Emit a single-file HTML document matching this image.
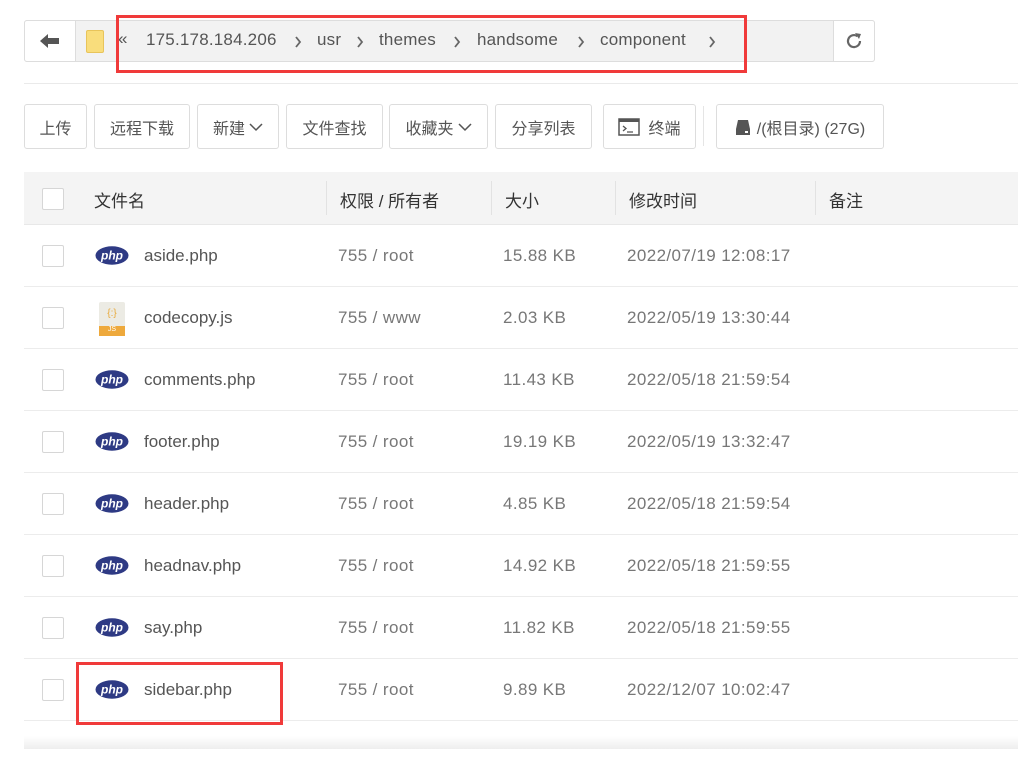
<!DOCTYPE html>
<html><head><meta charset="utf-8"><style>
*{box-sizing:border-box;margin:0;padding:0}
body{width:1018px;height:764px;background:#fff;font-family:"Liberation Sans","Noto Sans CJK SC",sans-serif;color:#555;position:relative;overflow:hidden}
.abs{position:absolute}
.path{left:24px;top:20px;width:851px;height:42px;border:1px solid #ddd;border-radius:3px;background:#f2f2f2}
.back{left:24px;top:20px;width:52px;height:42px;border:1px solid #ddd;border-radius:3px 0 0 3px;background:#fff}
.refresh{left:833px;top:20px;width:42px;height:42px;border:1px solid #ddd;border-radius:0 3px 3px 0;background:#fff}
.crumb{top:30px;font-size:17px;color:#555;letter-spacing:0.2px}
.btn{top:104px;height:45px;border:1px solid #ddd;border-radius:3px;background:#fff;font-size:16px;color:#555;display:flex;align-items:center;justify-content:center}
.hdr{left:24px;top:172px;width:994px;height:53px;background:#f4f4f4;border-bottom:1px solid #e8e8e8}
.cb{width:22px;height:22px;border:1px solid #d6d6d6;border-radius:2px;background:#fff}
.row{left:24px;width:994px;height:62px;border-bottom:1px solid #ececec}
.t{font-size:17px;color:#555}
.g{font-size:17px;color:#777;letter-spacing:0.4px}
.vd{width:1px;height:34px;background:#e2e2e2;top:181px}
.red{border:3px solid #f03a3a}
</style></head><body>
<div class="abs path"></div>
<div class="abs back"><svg class="abs" style="left:15px;top:12px" width="20" height="16" viewBox="0 0 20 16"><path d="M0 8 L8 1 V5 H19 V11 H8 V15Z" fill="#555"/></svg></div>
<div class="abs" style="left:86px;top:30px;width:18px;height:23px;background:#f9dd7c;border:1px solid #e8c45a;border-radius:2px"></div>
<div class="abs crumb" style="left:118px;top:29px">«</div>
<div class="abs crumb" style="left:146px">175.178.184.206</div>
<svg class="abs" style="left:294px;top:36px" width="8" height="12"><path d="M2 1 L6 6 L2 11" stroke="#666" stroke-width="1.8" fill="none"/></svg>
<div class="abs crumb" style="left:317px">usr</div>
<svg class="abs" style="left:356px;top:36px" width="8" height="12"><path d="M2 1 L6 6 L2 11" stroke="#666" stroke-width="1.8" fill="none"/></svg>
<div class="abs crumb" style="left:379px">themes</div>
<svg class="abs" style="left:453px;top:36px" width="8" height="12"><path d="M2 1 L6 6 L2 11" stroke="#666" stroke-width="1.8" fill="none"/></svg>
<div class="abs crumb" style="left:477px">handsome</div>
<svg class="abs" style="left:577px;top:36px" width="8" height="12"><path d="M2 1 L6 6 L2 11" stroke="#666" stroke-width="1.8" fill="none"/></svg>
<div class="abs crumb" style="left:600px">component</div>
<svg class="abs" style="left:708px;top:36px" width="8" height="12"><path d="M2 1 L6 6 L2 11" stroke="#666" stroke-width="1.8" fill="none"/></svg>
<div class="abs refresh"><svg class="abs" style="left:10px;top:10px" width="20" height="20" viewBox="0 0 20 20"><path d="M16 10 A6 6 0 1 1 13.5 5.2" fill="none" stroke="#666" stroke-width="2.2"/><path d="M11 2 L17 3 L15 8Z" fill="#666"/></svg></div>
<div class="abs" style="left:24px;top:83px;width:994px;height:1px;background:#eaeaea"></div>

<div class="abs btn" style="left:24px;width:63px">上传</div>
<div class="abs btn" style="left:94px;width:96px">远程下载</div>
<div class="abs btn" style="left:197px;width:82px">新建<svg width="14" height="10" style="margin-left:4px"><path d="M1 2 L7 8 L13 2" stroke="#555" stroke-width="1.5" fill="none"/></svg></div>
<div class="abs btn" style="left:286px;width:97px">文件查找</div>
<div class="abs btn" style="left:389px;width:99px">收藏夹<svg width="14" height="10" style="margin-left:4px"><path d="M1 2 L7 8 L13 2" stroke="#555" stroke-width="1.5" fill="none"/></svg></div>
<div class="abs btn" style="left:495px;width:97px">分享列表</div>
<div class="abs btn" style="left:603px;width:93px"><svg width="22" height="18" style="margin-right:8px"><rect x="1" y="1" width="20" height="16" fill="#fff" stroke="#555" stroke-width="1.5"/><rect x="1" y="1" width="20" height="3" fill="#555"/><path d="M5 8 L8 10.5 L5 13 M9 14 H15" stroke="#555" fill="none" stroke-width="1.3"/></svg>终端</div>
<div class="abs" style="left:703px;top:106px;width:1px;height:40px;background:#e5e5e5"></div>
<div class="abs btn" style="left:716px;width:168px"><svg width="16" height="16" style="margin-right:6px"><path d="M3 1 H13 L15 10 H1Z" fill="#555"/><rect x="1" y="10" width="14" height="6" fill="#555"/><rect x="10" y="12" width="3" height="2" fill="#fff"/></svg>/(根目录) (27G)</div>

<div class="abs hdr"></div>
<div class="abs cb" style="left:42px;top:188px"></div>
<div class="abs t" style="left:94px;top:187px;color:#333">文件名</div>
<div class="abs vd" style="left:326px"></div>
<div class="abs t" style="left:340px;top:187px;color:#333">权限 / 所有者</div>
<div class="abs vd" style="left:491px"></div>
<div class="abs t" style="left:505px;top:187px;color:#333">大小</div>
<div class="abs vd" style="left:615px"></div>
<div class="abs t" style="left:629px;top:187px;color:#333">修改时间</div>
<div class="abs vd" style="left:815px"></div>
<div class="abs t" style="left:829px;top:187px;color:#333">备注</div>

<div id="rows"></div>
<script>
var d=[["aside.php","755 / root","15.88 KB","2022/07/19 12:08:17"],["codecopy.js","755 / www","2.03 KB","2022/05/19 13:30:44"],["comments.php","755 / root","11.43 KB","2022/05/18 21:59:54"],["footer.php","755 / root","19.19 KB","2022/05/19 13:32:47"],["header.php","755 / root","4.85 KB","2022/05/18 21:59:54"],["headnav.php","755 / root","14.92 KB","2022/05/18 21:59:55"],["say.php","755 / root","11.82 KB","2022/05/18 21:59:55"],["sidebar.php","755 / root","9.89 KB","2022/12/07 10:02:47"]];
var h="";d.forEach(function(r,i){var y=225+i*62;
var icon=r[0].indexOf(".js")>0?'<div class="abs" style="left:99px;top:'+(y+15)+'px;width:26px;height:34px;background:#ecebe4;border-radius:2px"><div style="font-size:10px;color:#e8a93b;text-align:center;margin-top:6px">{:}</div><div style="position:absolute;bottom:0;left:0;width:26px;height:10px;background:#eea93c;color:#fff;font-size:7px;text-align:center">JS</div></div>':'<svg class="abs" style="left:95px;top:'+(y+21)+'px" width="34" height="19"><ellipse cx="17" cy="9.5" rx="16.5" ry="9.2" fill="#2e3a84"/><text x="17" y="13.5" text-anchor="middle" font-family="Liberation Sans" font-weight="bold" font-style="italic" font-size="12" fill="#fff">php</text></svg>';
h+='<div class="abs row" style="top:'+y+'px"></div><div class="abs cb" style="left:42px;top:'+(y+20)+'px"></div>'+icon+
'<div class="abs t" style="left:144px;top:'+(y+21)+'px">'+r[0]+'</div><div class="abs g" style="left:338px;top:'+(y+21)+'px">'+r[1]+'</div><div class="abs g" style="left:503px;top:'+(y+21)+'px">'+r[2]+'</div><div class="abs g" style="left:627px;top:'+(y+21)+'px">'+r[3]+'</div>';});
document.getElementById("rows").innerHTML=h;
</script>
<div class="abs" style="left:24px;top:736px;width:994px;height:13px;background:linear-gradient(#fff,#eee)"></div>
<div class="abs red" style="left:116px;top:15px;width:631px;height:58px"></div>
<div class="abs red" style="left:76px;top:662px;width:207px;height:63px"></div>
</body></html>
